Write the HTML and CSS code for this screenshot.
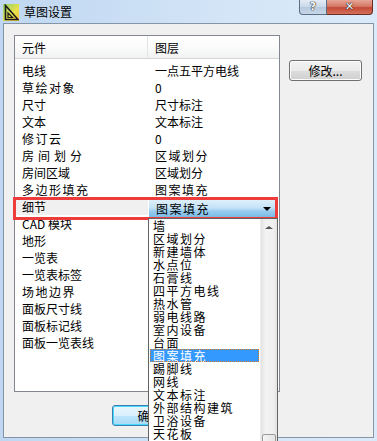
FILE: index.html
```html
<!DOCTYPE html>
<html lang="zh-CN">
<head>
  <meta charset="UTF-8" />
  <title>草图设置</title>
  <link rel="stylesheet" href="styles.css">
</head>
<body>
  <div class="window">
    <div class="titlebar">
      <svg class="app-icon" width="16" height="17" viewBox="0 0 16 17">
        <defs>
          <linearGradient id="ig" x1="0" y1="0" x2="1" y2="1">
            <stop offset="0" stop-color="#8fd16b"/>
            <stop offset="0.6" stop-color="#e9e04c"/>
            <stop offset="1" stop-color="#f6c233"/>
          </linearGradient>
        </defs>
        <rect x="0" y="0" width="16" height="17" fill="url(#ig)"/>
        <path d="M2.5 1.5 V15.5 H15 Z" fill="none" stroke="#1a1a1a" stroke-width="1.6"/>
        <path d="M5 9 V13.5 H9.5 Z" fill="none" stroke="#1a1a1a" stroke-width="1.2"/>
      </svg>
      <span class="title">草图设置</span>
      <div class="caption-btns">
        <div class="cap-btn help">?</div>
        <div class="cap-btn close">✕</div>
      </div>
    </div>

    <div class="client">
      <div class="main-row">
        <div class="listview">
          <div class="lv-header">
            <div class="col1">元件</div>
            <div class="col2">图层</div>
          </div>
          <div class="lv-body">
            <div class="lv-row"><span class="col1">电线</span><span class="col2">一点五平方电线</span></div>
            <div class="lv-row"><span class="col1 spaced">草绘对象</span><span class="col2">0</span></div>
            <div class="lv-row"><span class="col1">尺寸</span><span class="col2">尺寸标注</span></div>
            <div class="lv-row"><span class="col1">文本</span><span class="col2">文本标注</span></div>
            <div class="lv-row"><span class="col1 spaced">修订云</span><span class="col2">0</span></div>
            <div class="lv-row"><span class="col1 wide">房间划分</span><span class="col2 spaced">区域划分</span></div>
            <div class="lv-row"><span class="col1">房间区域</span><span class="col2">区域划分</span></div>
            <div class="lv-row"><span class="col1 spaced">多边形填充</span><span class="col2 spaced">图案填充</span></div>
            <div class="lv-row sel"><span class="col1">细节</span><span class="col2"></span></div>
            <div class="lv-row"><span class="col1">CAD 模块</span><span class="col2"></span></div>
            <div class="lv-row"><span class="col1">地形</span><span class="col2"></span></div>
            <div class="lv-row"><span class="col1">一览表</span><span class="col2"></span></div>
            <div class="lv-row"><span class="col1">一览表标签</span><span class="col2"></span></div>
            <div class="lv-row"><span class="col1 spaced">场地边界</span><span class="col2"></span></div>
            <div class="lv-row"><span class="col1">面板尺寸线</span><span class="col2"></span></div>
            <div class="lv-row"><span class="col1">面板标记线</span><span class="col2"></span></div>
            <div class="lv-row"><span class="col1">面板一览表线</span><span class="col2"></span></div>
          </div>
        </div>
        <div class="side">
          <button class="btn">修改...</button>
        </div>
      </div>
      <div class="bottom-row">
        <button class="btn default">确定</button>
        <button class="btn">取消</button>
      </div>

      <!-- 标注框 + 下拉框 -->
      <div class="combo">
        <span class="combo-text">图案填充</span>
        <span class="combo-arrow"></span>
      </div>
      <div class="mark-box"></div>
      <div class="dropdown">
        <div class="dd-list">
          <div class="dd-item">墙</div>
          <div class="dd-item">区域划分</div>
          <div class="dd-item">新建墙体</div>
          <div class="dd-item">水点位</div>
          <div class="dd-item">石膏线</div>
          <div class="dd-item">四平方电线</div>
          <div class="dd-item">热水管</div>
          <div class="dd-item">弱电线路</div>
          <div class="dd-item">室内设备</div>
          <div class="dd-item">台面</div>
          <div class="dd-item active">图案填充</div>
          <div class="dd-item">踢脚线</div>
          <div class="dd-item">网线</div>
          <div class="dd-item">文本标注</div>
          <div class="dd-item">外部结构建筑</div>
          <div class="dd-item">卫浴设备</div>
          <div class="dd-item">天花板</div>
          <div class="dd-item">灯具</div>
        </div>
        <div class="dd-scroll">
          <div class="sb-up"><span class="sb-arrow"></span></div>
          <div class="sb-thumb"></div>
        </div>
      </div>
    </div>
  </div>
</body>
</html>
```

FILE: styles.css
```css
* { box-sizing: border-box; }
html, body {
  margin: 0;
  padding: 0;
  overflow: hidden;
  font-family: "Noto Sans CJK SC", "Liberation Sans", sans-serif;
  font-size: 12px;
  color: #000;
}

.window {
  width: 377px;
  height: 441px;
  display: flex;
  flex-direction: column;
  background: linear-gradient(to right, #bfd7f1, #d3e5f7 60%, #dbeaf9);
}

/* 标题栏 */
.titlebar {
  height: 23px;
  display: flex;
  align-items: center;
  padding-left: 3px;
}
.app-icon {
  display: block;
  margin-top: 1px;
}
.title {
  margin-left: 5px;
  font-size: 12px;
  line-height: 14px;
}
.caption-btns {
  margin-left: auto;
  margin-right: 4px;
  align-self: flex-start;
  display: flex;
}
.cap-btn {
  height: 15px;
  border: 1px solid #5c6f85;
  border-top: none;
  color: #fff;
  font-weight: bold;
  text-align: center;
  font-family: "DejaVu Sans", sans-serif;
  font-size: 11px;
  line-height: 13px;
  text-shadow: 0 0 1px #222, 0 0 1px #222, 0 0 1px #222;
}
.help {
  width: 28px;
  border-radius: 0 0 0 4px;
  background: linear-gradient(#e3ecf6, #c9d8e8 50%, #b6c9dd 51%, #c7d7e8);
}
.close {
  width: 46px;
  border-left: none;
  border-color: #6b2c26;
  border-radius: 0 0 4px 0;
  background: linear-gradient(#e6a697, #d57865 45%, #c44a36 55%, #d2705c);
}

/* 客户区 */
.client {
  position: relative;
  flex: 1;
  margin: 0 3px 3px 3px;
  border: 1px solid #8595a8;
  background-color: #f0f0f0;
  display: flex;
  flex-direction: column;
}
.main-row {
  display: flex;
  align-items: flex-start;
}

.listview {
  margin: 11px 0 0 10px;
  width: 266px;
  height: 357px;
  border: 1px solid #828790;
  background-color: #fff;
}
.lv-header {
  height: 23px;
  display: flex;
  align-items: center;
  border-bottom: 1px solid #d5d5d5;
  background: linear-gradient(#ffffff, #fbfbfb 50%, #f1f2f3);
}
.lv-header .col1 {
  height: 100%;
  display: flex;
  align-items: center;
  border-right: 1px solid #e3e5e8;
}
.col1 {
  width: 133px;
  padding-left: 7px;
  white-space: nowrap;
}
.col2 {
  padding-left: 7px;
  white-space: nowrap;
}
.lv-body {
  padding-top: 3px;
}
.lv-row {
  height: 17px;
  line-height: 17px;
  display: flex;
}
.lv-row.sel .col1 {
  background-color: #f0f0f0;
}
.spaced { letter-spacing: 1.5px; }
.wide { letter-spacing: 4px; }

.side {
  margin: 36px 0 0 9px;
}
.btn {
  display: block;
  width: 73px;
  height: 21px;
  padding: 0;
  border: 1px solid #707070;
  border-radius: 3px;
  font-family: inherit;
  font-size: 12px;
  color: #000;
  background: linear-gradient(#f2f2f2, #ebebeb 50%, #dddddd 51%, #cfcfcf);
  box-shadow: inset 0 0 0 1px #fcfcfc;
}
.bottom-row {
  display: flex;
  gap: 6px;
  margin: 13px 0 0 108px;
}
.bottom-row .btn {
  width: 75px;
}
.btn.default {
  border-color: #3c7fb1;
  background: linear-gradient(#eaf6fd, #d9f0fc 50%, #bee6fd 51%, #a7d9f5);
  box-shadow: inset 0 0 0 1px #48d8fb;
}

/* 组合框 */
.combo {
  position: absolute;
  left: 144px;
  top: 175px;
  width: 129px;
  height: 20px;
  display: flex;
  align-items: center;
  padding-left: 7px;
  border-left: 1px solid #fff;
  background: linear-gradient(#e2f1fc, #c3e2f7 45%, #98cdf0 60%, #72b5e3);
}
.combo-text {
  letter-spacing: 1.5px;
  line-height: 16px;
}
.combo-arrow {
  margin-left: auto;
  margin-right: 6px;
  width: 0;
  height: 0;
  border-left: 4px solid transparent;
  border-right: 4px solid transparent;
  border-top: 4px solid #000;
}
.mark-box {
  position: absolute;
  left: 9px;
  top: 173px;
  width: 265px;
  height: 23px;
  border: 3px solid #ee3b3b;
}

/* 下拉列表 */
.dropdown {
  position: absolute;
  left: 144px;
  top: 194px;
  width: 130px;
  height: 240px;
  display: flex;
  border: 1px solid #646464;
  background-color: #fff;
}
.dd-list {
  flex: 1;
  padding: 0 1px;
}
.dd-item {
  height: 13px;
  line-height: 13px;
  padding-left: 3px;
  letter-spacing: 1.5px;
  white-space: nowrap;
}
.dd-item.active {
  background-color: #3399ff;
  color: #fff;
  outline: 1px dotted #e07a2a;
  outline-offset: -1px;
}
.dd-scroll {
  width: 17px;
  display: flex;
  flex-direction: column;
  background: linear-gradient(to right, #e3e3e3, #f3f3f3 30%, #efefef 80%, #e2e2e2);
  border-left: 1px solid #ececec;
}
.sb-up {
  height: 17px;
  display: flex;
  justify-content: center;
  padding-top: 7px;
}
.sb-arrow {
  width: 0;
  height: 0;
  border-left: 4px solid transparent;
  border-right: 4px solid transparent;
  border-bottom: 3px solid #555;
}
.sb-thumb {
  margin-top: 198px;
  height: 20px;
  margin-left: 1px;
  margin-right: 1px;
  border: 1px solid #9a9a9a;
  border-radius: 2px;
  background: linear-gradient(to right, #f4f4f4, #e4e4e4);
}
```
